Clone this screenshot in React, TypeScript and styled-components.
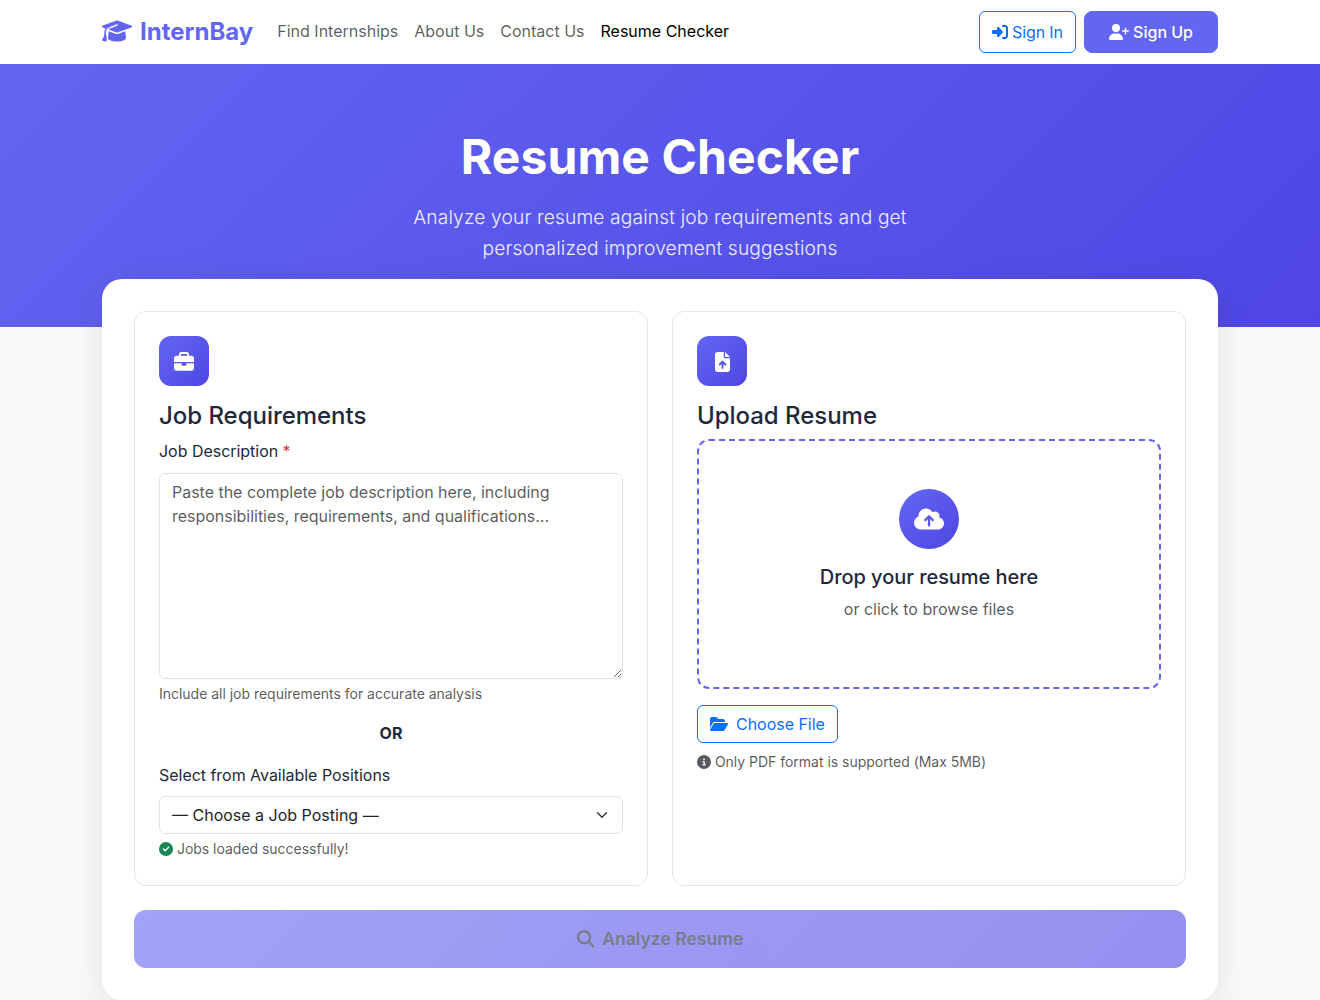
import React from "react";
import styled, { createGlobalStyle, css } from "styled-components";
import {
  FaGraduationCap,
  FaRightToBracket,
  FaUserPlus,
  FaBriefcase,
  FaFileArrowUp,
  FaCloudArrowUp,
  FaFolderOpen,
  FaCircleInfo,
  FaCircleCheck,
  FaMagnifyingGlass,
} from "react-icons/fa6";

const GlobalStyle = createGlobalStyle`
  *, *::before, *::after { box-sizing: border-box; }
  body {
    margin: 0;
    background: #f8fafc;
    color: #1e293b;
    font-family: Inter, "Liberation Sans", sans-serif;
    font-size: 16px;
    line-height: 1.6;
  }
  h1, h4, h5, p { margin: 0; }
  button, textarea, select { font-family: inherit; }
`;

const brandGradient = "linear-gradient(135deg, #6366f1 0%, #4f46e5 100%)";

const Glyph = styled.span<{ $w?: number; $gap?: number; $color?: string; $drop?: number }>`
  display: inline-block;
  line-height: 1;
  margin-right: ${(p) => p.$gap ?? 0}px;
  color: ${(p) => p.$color ?? "inherit"};
  svg {
    display: inline-block;
    width: ${(p) => p.$w ?? 1}em;
    height: 1em;
    vertical-align: -${(p) => p.$drop ?? 0.125}em;
  }
`;

const Container = styled.div`
  width: 1140px;
  margin: 0 auto;
  padding: 0 12px;
`;

const Navbar = styled.nav`
  padding: 8px 0;
  background: #fff;
`;

const NavInner = styled(Container)`
  display: flex;
  align-items: center;
`;

const Brand = styled.a`
  margin-right: 16px;
  padding: 5px 0;
  color: #6366f1;
  font-size: 24px;
  font-weight: 700;
  text-decoration: none;
  white-space: nowrap;
`;

const NavLinks = styled.div`
  display: flex;
  flex: 1;
`;

const NavLink = styled.a<{ $active?: boolean }>`
  padding: 8px;
  color: ${(p) => (p.$active ? "#000" : "rgba(0, 0, 0, 0.65)")};
  text-decoration: none;
`;

const NavActions = styled.div`
  display: flex;
  gap: 8px;
`;

const buttonBase = css`
  font-size: 16px;
  line-height: 24px;
  cursor: pointer;
`;

const OutlineButton = styled.button<{ $tracking?: number }>`
  ${buttonBase}
  padding: 6px 12px;
  border: 1px solid #0d6efd;
  border-radius: 6px;
  background: transparent;
  color: #0d6efd;
  letter-spacing: ${(p) => p.$tracking ?? -0.03}px;
`;

const PrimaryButton = styled.button`
  ${buttonBase}
  padding: 8px 24px;
  border: 1px solid #6366f1;
  border-radius: 8px;
  background: #6366f1;
  color: #fff;
  font-weight: 500;
`;

const Hero = styled.header`
  padding: 64px 0;
  background: ${brandGradient};
  color: #fff;
  text-align: center;
`;

const HeroTitle = styled.h1`
  margin-bottom: 16px;
  font-size: 48px;
  font-weight: 700;
  line-height: 1.2;
  letter-spacing: 0.1px;
`;

const HeroLead = styled.p`
  max-width: 600px;
  margin: 0 auto;
  font-size: 19.2px;
  font-weight: 300;
  letter-spacing: 0.14px;
  opacity: 0.9;
`;

const Panel = styled.main`
  position: relative;
  margin-top: -48px;
  padding: 32px;
  border-radius: 20px;
  background: #fff;
  box-shadow: 0 10px 40px rgba(0, 0, 0, 0.1);
`;

const Columns = styled.div`
  display: grid;
  grid-template-columns: 1fr 1fr;
  gap: 24px;
`;

const Card = styled.section`
  padding: 24px;
  border: 1px solid #e2e8f0;
  border-radius: 12px;
  background: #fff;
`;

const CardIcon = styled.div`
  display: flex;
  align-items: center;
  justify-content: center;
  width: 50px;
  height: 50px;
  margin-bottom: 16px;
  padding-top: 1px;
  border-radius: 12px;
  background: ${brandGradient};
  color: #fff;
  font-size: 20px;
`;

const CardTitle = styled.h4`
  margin-bottom: 8px;
  font-size: 24px;
  font-weight: 500;
  line-height: 1.2;
  letter-spacing: -0.03px;
`;

const Label = styled.label`
  display: block;
  margin-bottom: 8px;
  letter-spacing: -0.03px;
`;

const Required = styled.span`
  color: #dc3545;
`;

const TextArea = styled.textarea`
  display: block;
  width: 100%;
  height: 206px;
  padding: 6px 12px;
  border: 1px solid #dee2e6;
  border-radius: 6px;
  background: #fff;
  color: #212529;
  font-size: 16px;
  line-height: 1.5;
  letter-spacing: -0.02px;
  resize: vertical;
  &::placeholder {
    color: rgba(33, 37, 41, 0.75);
    opacity: 1;
  }
`;

const Hint = styled.div<{ $top?: number }>`
  margin-top: ${(p) => p.$top ?? 4}px;
  color: rgba(33, 37, 41, 0.75);
  font-size: 14px;
  letter-spacing: -0.02px;
`;

const Divider = styled.div`
  margin: 16px 0;
  font-weight: 700;
  text-align: center;
`;

const Select = styled.select`
  display: block;
  width: 100%;
  height: 38px;
  padding: 6px 36px 6px 12px;
  border: 1px solid #dee2e6;
  border-radius: 6px;
  color: #212529;
  font-size: 16px;
  line-height: 1.5;
  appearance: none;
  background: #fff
    url("data:image/svg+xml,%3csvg xmlns='http://www.w3.org/2000/svg' viewBox='0 0 16 16'%3e%3cpath fill='none' stroke='%23343a40' stroke-linecap='round' stroke-linejoin='round' stroke-width='2' d='m2 5 6 6 6-6'/%3e%3c/svg%3e")
    no-repeat right 12px center / 16px 12px;
`;

const DropZone = styled.div`
  display: flex;
  flex-direction: column;
  align-items: center;
  height: 250px;
  margin-bottom: 16px;
  padding: 48px;
  border: 2px dashed #6366f1;
  border-radius: 12px;
`;

const DropIcon = styled.div`
  display: flex;
  align-items: center;
  justify-content: center;
  width: 60px;
  height: 60px;
  margin-bottom: 16px;
  border-radius: 50%;
  background: ${brandGradient};
  color: #fff;
  font-size: 24px;
`;

const DropTitle = styled.h5`
  margin-bottom: 8px;
  font-size: 20px;
  font-weight: 500;
  line-height: 1.2;
  letter-spacing: -0.05px;
`;

const DropText = styled.p`
  color: rgba(33, 37, 41, 0.75);
`;

const AnalyzeButton = styled.button`
  display: block;
  width: 100%;
  margin-top: 24px;
  padding: 16px;
  border: 0;
  border-radius: 12px;
  background: ${brandGradient};
  color: #1e293b;
  font-size: 17.6px;
  font-weight: 600;
  line-height: 1.5;
  letter-spacing: -0.03px;
  opacity: 0.6;
`;

export default function App() {
  return (
    <>
      <GlobalStyle />
      <Navbar>
        <NavInner>
          <Brand>
            <Glyph $w={1.25} $gap={8} $drop={0.135}><FaGraduationCap /></Glyph>InternBay
          </Brand>
          <NavLinks>
            <NavLink>Find Internships</NavLink>
            <NavLink>About Us</NavLink>
            <NavLink>Contact Us</NavLink>
            <NavLink $active>Resume Checker</NavLink>
          </NavLinks>
          <NavActions>
            <OutlineButton $tracking={-0.13}>
              <Glyph><FaRightToBracket /></Glyph> Sign In
            </OutlineButton>
            <PrimaryButton>
              <Glyph $w={1.25}><FaUserPlus /></Glyph> Sign Up
            </PrimaryButton>
          </NavActions>
        </NavInner>
      </Navbar>

      <Hero>
        <HeroTitle>Resume Checker</HeroTitle>
        <HeroLead>
          Analyze your resume against job requirements and get personalized improvement suggestions
        </HeroLead>
      </Hero>

      <Container>
        <Panel>
          <Columns>
            <Card>
              <CardIcon><Glyph><FaBriefcase /></Glyph></CardIcon>
              <CardTitle>Job Requirements</CardTitle>
              <Label htmlFor="description">
                Job Description <Required>*</Required>
              </Label>
              <TextArea
                id="description"
                placeholder="Paste the complete job description here, including responsibilities, requirements, and qualifications..."
              />
              <Hint>Include all job requirements for accurate analysis</Hint>
              <Divider>OR</Divider>
              <Label htmlFor="posting">Select from Available Positions</Label>
              <Select id="posting">
                <option>— Choose a Job Posting —</option>
              </Select>
              <Hint>
                <Glyph $color="#198754"><FaCircleCheck /></Glyph> Jobs loaded successfully!
              </Hint>
            </Card>

            <Card>
              <CardIcon><Glyph $w={0.75}><FaFileArrowUp /></Glyph></CardIcon>
              <CardTitle>Upload Resume</CardTitle>
              <DropZone>
                <DropIcon><Glyph $w={1.25}><FaCloudArrowUp /></Glyph></DropIcon>
                <DropTitle>Drop your resume here</DropTitle>
                <DropText>or click to browse files</DropText>
              </DropZone>
              <OutlineButton>
                <Glyph $w={1.125} $gap={8}><FaFolderOpen /></Glyph>Choose File
              </OutlineButton>
              <Hint $top={8}>
                <Glyph><FaCircleInfo /></Glyph> Only PDF format is supported (Max 5MB)
              </Hint>
            </Card>
          </Columns>
          <AnalyzeButton disabled>
            <Glyph $gap={8} $drop={0.17}><FaMagnifyingGlass /></Glyph>Analyze Resume
          </AnalyzeButton>
        </Panel>
      </Container>
    </>
  );
}
